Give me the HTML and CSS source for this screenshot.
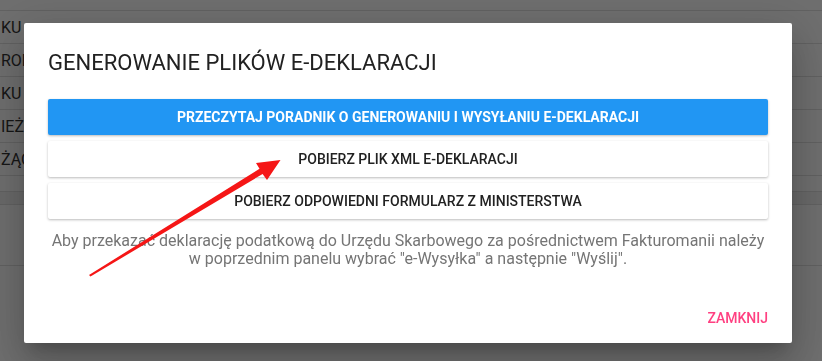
FILE: index.html
```html
<!DOCTYPE html>
<html lang="pl">
    <head>
        <meta charset="UTF-8" />
        <meta name="viewport" content="width=device-width, initial-scale=1.0" />
        <title>E-deklaracje</title>
        <link rel="stylesheet" href="styles.css">
    </head>

    <body>
        <!-- tabela pod spodem -->
        <div class="table">
            <div class="row row-top"></div>
            <div class="row"><span class="cell">KU</span></div>
            <div class="row"><span class="cell">ROKU</span></div>
            <div class="row"><span class="cell">KU</span></div>
            <div class="row"><span class="cell">IEŻĄCY</span></div>
            <div class="row"><span class="cell">ŻĄCE</span></div>
            <div class="row row-short"></div>
            <div class="row row-band"></div>
            <div class="row row-tall"></div>
        </div>

        <!-- okno dialogowe -->
        <div class="overlay">
            <div class="dialog">
                <h2 class="dialog-title">Generowanie plików e-deklaracji</h2>
                <div class="actions">
                    <button class="btn btn-primary">Przeczytaj poradnik o generowaniu i wysyłaniu e-deklaracji</button>
                    <button class="btn">Pobierz plik XML e-deklaracji</button>
                    <button class="btn">Pobierz odpowiedni formularz z ministerstwa</button>
                </div>
                <p class="info">Aby przekazać deklarację podatkową do Urzędu Skarbowego za pośrednictwem Fakturomanii należy w poprzednim panelu wybrać "e-Wysyłka" a następnie "Wyślij".</p>
                <div class="dialog-footer">
                    <button class="btn-flat">Zamknij</button>
                </div>
            </div>
        </div>

        <!-- strzałka -->
        <svg class="arrow" width="822" height="361" viewBox="0 0 822 361">
            <polygon points="89,275 259.5,168.8 256,163 280.5,160 267,180 262.6,174 90.5,276.5" fill="#f51616" />
        </svg>
    </body>
</html>
```

FILE: styles.css
```css
* {
    margin: 0;
    padding: 0;
    box-sizing: border-box;
}
html,
body {
    width: 100%;
    height: 100%;
    overflow: hidden;
}
body {
    background: #fff;
    font-family: Roboto, "Noto Sans", sans-serif;
    color: #212121;
}

/* tabela w tle */
.table {
    width: 100%;
}
.row {
    height: 33px;
    border-bottom: 1px solid #e0e0e0;
    display: flex;
    align-items: center;
    font-size: 16px;
    color: #333;
}
.row-top {
    height: 11px;
}
.row-short {
    height: 16px;
}
.row-band {
    height: 13px;
    background: #f2f2f2;
}
.row-tall {
    height: 61px;
}
.cell {
    padding-left: 1px;
    white-space: nowrap;
}

.overlay {
    position: fixed;
    top: 0;
    left: 0;
    right: 0;
    bottom: 0;
    background: rgba(0, 0, 0, 0.57);
    padding: 23px 0 0 24px;
}
.dialog {
    width: 768px;
    height: 320px;
    background: #fff;
    border-radius: 2px;
    padding: 24px 24px 0 24px;
    box-shadow: 0 11px 15px -7px rgba(0, 0, 0, 0.2), 0 24px 38px 3px rgba(0, 0, 0, 0.14),
        0 9px 46px 8px rgba(0, 0, 0, 0.12);
}
.dialog-title {
    font-size: 22px;
    font-weight: 400;
    line-height: 32px;
    text-transform: uppercase;
    color: #212121;
}
.actions {
    margin-top: 20px;
    display: flex;
    flex-direction: column;
    gap: 6px;
}
.btn {
    height: 36px;
    border: none;
    border-radius: 2px;
    background: #fff;
    font-family: Roboto, sans-serif;
    font-size: 14px;
    font-weight: 500;
    text-transform: uppercase;
    color: #212121;
    box-shadow: 0 1px 3px rgba(0, 0, 0, 0.18), 0 1px 2px rgba(0, 0, 0, 0.1);
}
.btn-primary {
    background: #2196f3;
    color: #fff;
    font-weight: 700;
}
.info {
    margin-top: 13px;
    font-size: 16px;
    line-height: 18px;
    text-align: center;
    color: #757575;
}
.dialog-footer {
    margin-top: 32px;
    display: flex;
    justify-content: flex-end;
}
.btn-flat {
    height: 36px;
    border: none;
    background: none;
    font-family: Roboto, sans-serif;
    font-size: 14px;
    font-weight: 500;
    text-transform: uppercase;
    color: #ff4081;
}

.arrow {
    position: absolute;
    top: 0;
    left: 0;
    pointer-events: none;
}
```
